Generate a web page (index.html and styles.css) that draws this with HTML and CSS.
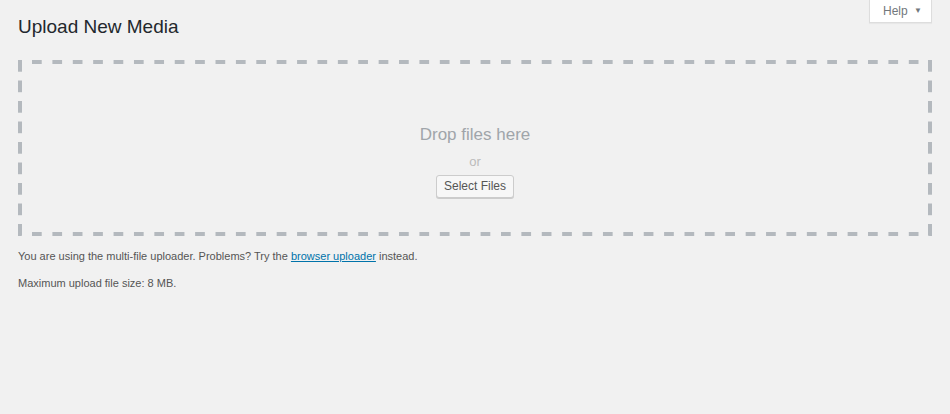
FILE: index.html
```html
<!DOCTYPE html>
<html>
<head>
<meta charset="utf-8">
<link rel="stylesheet" href="styles.css">
</head>
<body>
<div class="screen-meta">
  <button class="help-tab">Help <span class="caret">▼</span></button>
</div>
<div class="wrap">
  <h1 class="title">Upload New Media</h1>
  <div class="drop-area">
    <p class="drop-text">Drop files here</p>
    <p class="or">or</p>
    <button class="select-btn">Select Files</button>
  </div>
  <p class="note">You are using the multi-file uploader. Problems? Try the <a href="#" class="link">browser uploader</a> instead.</p>
  <p class="note max">Maximum upload file size: 8 MB.</p>
</div>
</body>
</html>
```

FILE: styles.css
```css
html, body {
  margin: 0;
  padding: 0;
  background: #f1f1f1;
}
body {
  font-family: "Liberation Sans", Arial, sans-serif;
  color: #444;
  font-size: 13px;
  width: 950px;
  height: 414px;
  position: relative;
  overflow: hidden;
}
.screen-meta {
  position: absolute;
  top: 0;
  right: 18px;
}
.help-tab {
  font-family: "Liberation Sans", Arial, sans-serif;
  font-size: 12px;
  color: #72777c;
  background: #fff;
  border: 1px solid #ddd;
  border-top: none;
  box-shadow: 0 1px 1px rgba(0,0,0,0.04);
  height: 23px;
  width: 63px;
  padding: 0 0 0 4px;
  text-align: center;
  line-height: 22px;
}
.caret {
  font-size: 8px;
  margin-left: 3px;
  position: relative;
  top: -2px;
}
.wrap {
  padding: 0 18px;
}
.title {
  margin: 0;
  padding: 14px 0 0;
  font-size: 19px;
  font-weight: 400;
  line-height: 26px;
  color: #23282d;
}
.drop-area {
  margin-top: 20px;
  box-sizing: border-box;
  height: 176px;
  padding: 4px;
  background:
    linear-gradient(to bottom, #b4b9be 12px, transparent 12px) left top / 4px 20.5px repeat-y,
    linear-gradient(to bottom, #b4b9be 12px, transparent 12px) right top / 4px 20.5px repeat-y,
    linear-gradient(to right, #b4b9be 10px, transparent 10px) 14px top / 20.4px 4px repeat-x,
    linear-gradient(to right, #b4b9be 10px, transparent 10px) 14px bottom / 20.4px 4px repeat-x;
  display: flex;
  flex-direction: column;
  align-items: center;
}
.drop-text {
  margin: 60px 0 0;
  font-size: 17px;
  line-height: 22px;
  color: #a0a5aa;
}
.or {
  margin: 8px 0 0;
  font-size: 13px;
  line-height: 16px;
  color: #bbb;
}
.select-btn {
  margin-top: 5px;
  font-family: "Liberation Sans", Arial, sans-serif;
  font-size: 12px;
  color: #555;
  background: #f7f7f7;
  border: 1px solid #ccc;
  border-radius: 3px;
  box-shadow: 0 1px 0 #ccc;
  height: 23px;
  padding: 0 7px;
  line-height: 21px;
}
.note {
  margin: 12px 0 0;
  font-size: 11px;
  line-height: 16px;
  color: #555;
}
.note.max {
  margin-top: 11px;
}
.link {
  color: #0073aa;
  text-decoration: underline;
}
```
